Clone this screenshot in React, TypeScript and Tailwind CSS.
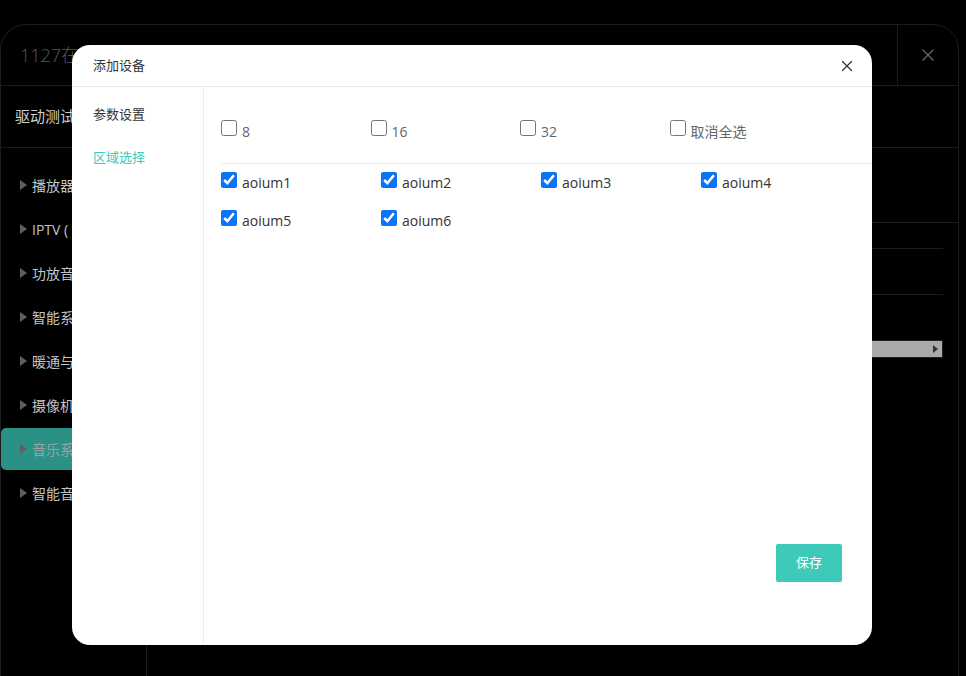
import { X } from "lucide-react";

const groups = ["播放器", "IPTV (", "功放音", "智能系", "暖通与", "摄像机", "音乐系", "智能音"];
const topOptions = ["8", "16", "32", "取消全选"];
const zones = ["aoium1", "aoium2", "aoium3", "aoium4", "aoium5", "aoium6"];

const font = { fontFamily: '"Open Sans", "Noto Sans CJK SC", sans-serif' };

function Background() {
  return (
    <div className="h-[676px] w-[966px] overflow-hidden bg-black pt-[24px]">
      <div className="flex h-[700px] w-[959px] flex-col rounded-t-[26px] border border-[#1c1c1c]">
        <div className="flex h-[61px] items-center border-b border-[#1c1c1c]">
          <div className="flex-1 pl-[19px] text-[18px] font-light text-[#5a5a5a]">1127在</div>
          <div className="flex h-full w-[61px] items-center justify-center border-l border-[#1c1c1c] text-[#6a6a6a]">
            <X size={20} strokeWidth={1.5} />
          </div>
        </div>
        <div className="flex h-[62px] items-center border-b border-[#1c1c1c] pl-[14px] text-[15px] text-[#cfcfcf]">
          驱动测试
        </div>
        <div className="flex flex-1">
          <div className="w-[146px] border-r border-[#1c1c1c] pt-[16px]">
            {groups.map((g, i) => (
              <div
                key={g}
                className={`mb-[2px] flex h-[42px] items-center rounded-[5px] pl-[19px] text-[14px] ${
                  i === 6 ? "bg-[#2a9184] text-[#9aa5a3]" : "text-[#c4c4c4]"
                }`}
              >
                <span className="mr-[5px] h-0 w-0 border-y-[5px] border-l-[7px] border-y-transparent border-l-[#5f5f5f]" />
                {g}
              </div>
            ))}
          </div>
          <div className="flex-1">
            <div className="h-[75px] border-b border-[#1c1c1c]" />
            <div className="mr-[15px] h-[26px] border-b border-[#1c1c1c]" />
            <div className="mr-[15px] h-[46px] border-b border-[#1c1c1c]" />
            <div className="mr-[15px] mt-[45px] flex h-[18px] items-center justify-end border border-[#222] bg-[#a9a9a9] pr-[4px]">
              <span className="h-0 w-0 border-y-[4px] border-l-[5px] border-y-transparent border-l-[#333]" />
            </div>
          </div>
        </div>
      </div>
    </div>
  );
}

function Box({ checked }: { checked?: boolean }) {
  return (
    <input
      type="checkbox"
      defaultChecked={checked}
      className="m-0 mr-[5px] h-[16px] w-[16px] shrink-0 accent-[#0a75f5]"
    />
  );
}

function Modal() {
  return (
    <div className="absolute left-[72px] top-[45px] flex h-[600px] w-[800px] flex-col overflow-hidden rounded-[18px] bg-white" style={font}>
      <div className="flex h-[42px] shrink-0 items-center justify-between border-b border-[#ebebeb] pl-[21px] pr-[16px]">
        <span className="text-[13px] text-[#333]">添加设备</span>
        <X size={18} strokeWidth={1.6} className="text-[#333]" />
      </div>
      <div className="flex flex-1">
        <div className="w-[132px] border-r border-[#ededed] pl-[21px] pt-[6px] text-[13px]">
          <div className="flex h-[43px] items-center text-[#333]">参数设置</div>
          <div className="flex h-[43px] items-center text-[#3ec9b8]">区域选择</div>
        </div>
        <div className="flex flex-1 flex-col pl-[17px]">
          <div className="flex h-[77px] items-start border-b border-[#ebebeb] pt-[33px]">
            {topOptions.map((o) => (
              <label key={o} className="flex w-[149.5px] items-start">
                <span className="flex"><Box /></span>
                <span className="mt-[3px] text-[14px] leading-[18px] text-[#666]">{o}</span>
              </label>
            ))}
          </div>
          <div className="flex w-[640px] flex-wrap pt-[8px]">
            {zones.map((z) => (
              <label key={z} className="mb-[22px] flex h-[16px] w-[160px] items-start">
                <span className="flex"><Box checked /></span>
                <span className="mt-[2px] text-[14px] leading-[18px] text-[#333]">{z}</span>
              </label>
            ))}
          </div>
          <div className="flex-1" />
          <button className="mb-[63px] mr-[30px] flex h-[38px] w-[66px] items-center justify-center self-end rounded-[2px] bg-[#3ec9b9] text-[13px] text-white">
            保存
          </button>
        </div>
      </div>
    </div>
  );
}

export default function App() {
  return (
    <div className="relative h-[676px] w-[966px] overflow-hidden" style={font}>
      <Background />
      <Modal />
    </div>
  );
}
